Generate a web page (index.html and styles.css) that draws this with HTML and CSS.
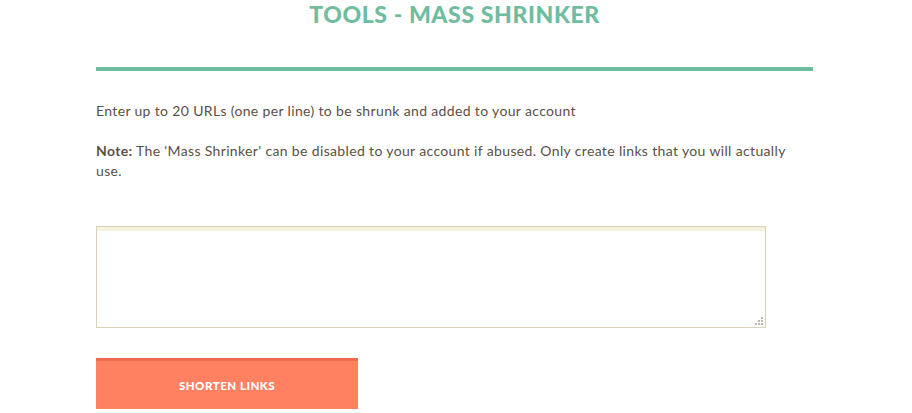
FILE: index.html
```html
<!DOCTYPE html>
<html>
<head>
<meta charset="utf-8">
<link rel="stylesheet" href="styles.css">
</head>
<body>
<main class="page">
  <h1 class="title">TOOLS - MASS SHRINKER</h1>
  <hr class="rule">
  <p class="intro">Enter up to 20 URLs (one per line) to be shrunk and added to your account</p>
  <p class="note"><strong>Note:</strong> The 'Mass Shrinker' can be disabled to your account if abused. Only create links that you will actually use.</p>
  <form class="form">
    <div class="field">
      <textarea class="urls"></textarea>
      <svg class="grip" width="8" height="8" viewBox="0 0 8 8"><rect x="6" y="0" width="2" height="2" fill="#b9b9b9"/><rect x="3" y="3" width="2" height="2" fill="#b9b9b9"/><rect x="6" y="3" width="2" height="2" fill="#b9b9b9"/><rect x="0" y="6" width="2" height="2" fill="#b9b9b9"/><rect x="3" y="6" width="2" height="2" fill="#b9b9b9"/><rect x="6" y="6" width="2" height="2" fill="#b9b9b9"/></svg>
    </div>
    <button type="button" class="submit">SHORTEN LINKS</button>
  </form>
</main>
</body>
</html>
```
FILE: styles.css
```css
html, body {
  margin: 0;
  padding: 0;
  background: #ffffff;
}
body {
  font-family: "Lato", "Open Sans", sans-serif;
  color: #5b4f47;
  font-size: 14px;
  letter-spacing: 0.35px;
  overflow: hidden;
}
.page {
  width: 717px;
  margin-left: 96px;
}
.title {
  margin: 0;
  padding-top: 1px;
  text-align: center;
  font-family: "Lato", sans-serif;
  font-weight: 900;
  font-size: 23px;
  line-height: 26px;
  color: #6fbc9f;
  letter-spacing: 0.6px;
}
.rule {
  margin: 40px 0 0 0;
  height: 4px;
  border: 0;
  background: #6fbc9f;
}
.intro {
  margin: 30px 0 0 0;
  line-height: 20px;
}
.note {
  margin: 20px 0 0 0;
  line-height: 20px;
  width: 700px;
}
.note strong {
  font-weight: 700;
}
.form {
  margin-top: 45px;
  display: flex;
  flex-direction: column;
  align-items: flex-start;
  gap: 30px;
}
.field {
  position: relative;
  width: 670px;
  height: 102px;
}
.urls {
  display: block;
  box-sizing: border-box;
  width: 670px;
  height: 102px;
  margin: 0;
  border: 1px solid #d9d4b8;
  border-radius: 0;
  box-shadow: inset 0 4px 0 #f5f2e0;
  background: #fff;
  resize: none;
  font-family: inherit;
}
.grip {
  position: absolute;
  right: 3px;
  bottom: 3px;
}
.submit {
  box-sizing: border-box;
  width: 262px;
  height: 51px;
  border: 0;
  border-top: 3px solid #f06a4d;
  background: #ff8162;
  color: #ffffff;
  font-family: "Lato", sans-serif;
  font-weight: 900;
  font-size: 11.5px;
  letter-spacing: 0.5px;
  padding: 0;
}
```
